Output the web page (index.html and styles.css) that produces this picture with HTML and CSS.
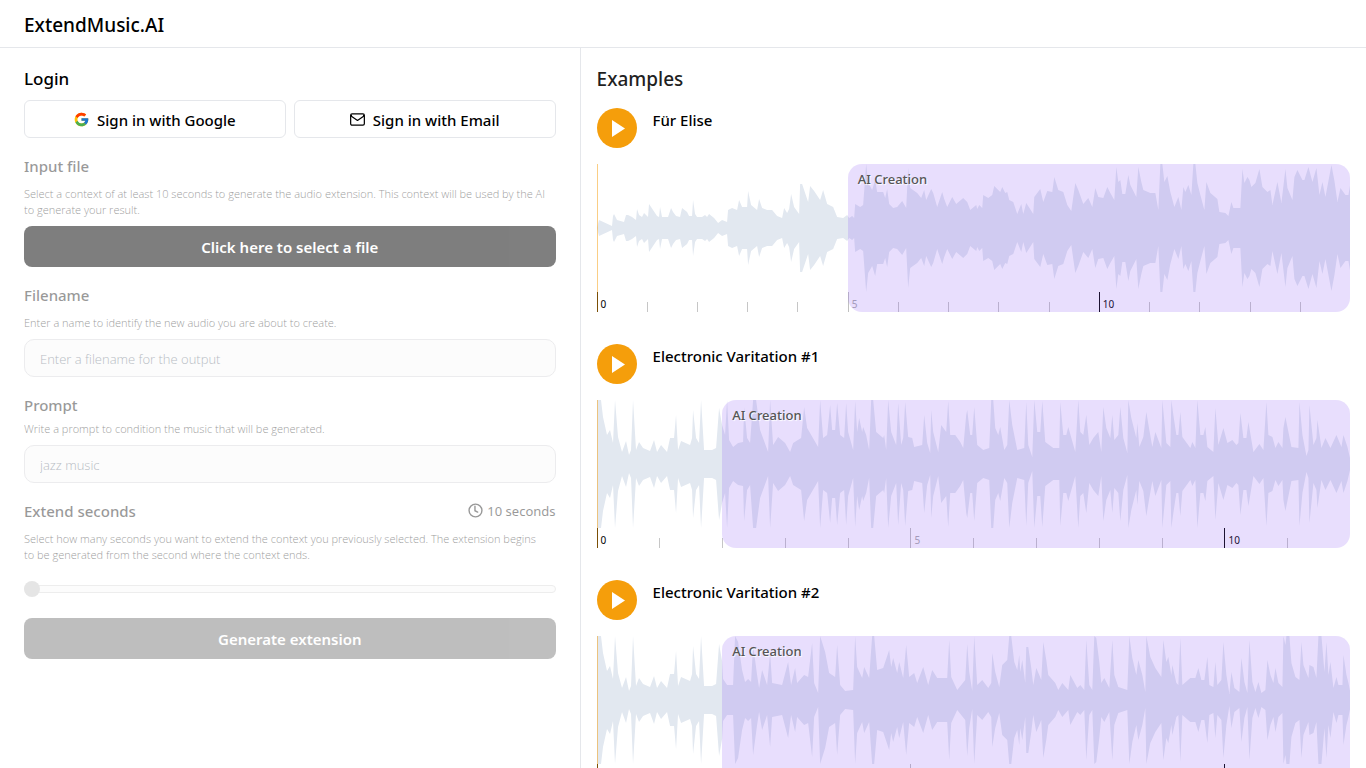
FILE: index.html
```html
<!DOCTYPE html>
<html lang="en">
<head>
<meta charset="utf-8">
<meta name="viewport" content="width=device-width, initial-scale=1">
<title>ExtendMusic.AI</title>
<link rel="stylesheet" href="styles.css">
</head>
<body>
<header class="topbar"><h1 class="brand">ExtendMusic.AI</h1></header>
<main class="layout">
  <section class="panel">
    <h2 class="panel-title">Login</h2>
    <div class="login-row">
      <button class="login-btn" type="button">
        <svg class="icon" viewBox="2 2 44 44" aria-hidden="true">
          <path fill="#FFC107" d="M43.6 20H24v8h11.3C33.7 32.700 29.200 36 24 36c-6.600 0-12-5.400-12-12s5.400-12 12-12c3.100 0 5.800 1.200 8 3l5.700-5.700C34 6.100 29.300 4 24 4 13 4 4 13 4 24s9 20 20 20 20-9 20-20c0-1.300-.1-2.700-.4-4z"/>
          <path fill="#FF3D00" d="M6.300 14.700l6.600 4.800C14.700 15.100 19 12 24 12c3.100 0 5.800 1.200 8 3l5.700-5.700C34 6.100 29.300 4 24 4 16.300 4 9.700 8.300 6.300 14.700z"/>
          <path fill="#4CAF50" d="M24 44c5.200 0 9.900-2 13.400-5.200l-6.200-5.200C29.200 35.100 26.700 36 24 36c-5.200 0-9.600-3.300-11.300-8l-6.500 5C9.500 39.600 16.200 44 24 44z"/>
          <path fill="#1976D2" d="M43.600 20H24v8h11.300c-.8 2.200-2.200 4.200-4.100 5.600l6.200 5.200C37 39.200 44 34 44 24c0-1.300-.1-2.700-.4-4z"/>
        </svg>
        Sign in with Google
      </button>
      <button class="login-btn" type="button">
        <svg class="icon" viewBox="0 0 16 16" fill="none" stroke="currentColor" stroke-width="1.300" stroke-linejoin="round" stroke-linecap="round" aria-hidden="true">
          <rect x="0.700" y="2" width="14.600" height="12" rx="1.500"/><path d="M1.500 3.500v1L8 9l6.500-4.500v-1"/>
        </svg>
        Sign in with Email
      </button>
    </div>

    <form class="form">
      <div class="field">
        <label class="label muted" for="file">Input file</label>
        <p class="hint muted">Select a context of at least 10 seconds to generate the audio extension. This context will be used by the AI to generate your result.</p>
        <button class="primary file-btn" id="file" type="button" disabled>Click here to select a file</button>
      </div>
      <div class="field">
        <label class="label muted" for="filename">Filename</label>
        <p class="hint muted">Enter a name to identify the new audio you are about to create.</p>
        <input class="text-input" id="filename" type="text" placeholder="Enter a filename for the output" disabled>
      </div>
      <div class="field field-tight">
        <label class="label muted" for="prompt">Prompt</label>
        <p class="hint muted">Write a prompt to condition the music that will be generated.</p>
        <input class="text-input" id="prompt" type="text" placeholder="jazz music" disabled>
      </div>
      <div class="field">
        <div class="label-row muted">
          <label class="label" for="seconds">Extend seconds</label>
          <output class="duration" for="seconds">
            <svg class="icon" viewBox="1 1 14 14" fill="none" stroke="currentColor" stroke-width="1.300" stroke-linecap="round" aria-hidden="true"><circle cx="8" cy="8" r="6"/><path d="M7.500 4v4.200l2.500 1.300"/></svg>
            10 seconds
          </output>
        </div>
        <p class="hint muted">Select how many seconds you want to extend the context you previously selected. The extension begins to be generated from the second where the context ends.</p>
        <input class="slider" id="seconds" type="range" min="10" max="60" value="10" disabled>
      </div>
      <button class="primary generate-btn" type="submit" disabled>Generate extension</button>
    </form>
  </section>

  <section class="examples">
    <h2 class="examples-title">Examples</h2>
    <article class="example" data-wave="elise" data-seconds="15" data-start="5">
      <div class="example-head">
        <button class="play" type="button" aria-label="Play Für Elise"><svg viewBox="0 0 40 40"><path d="M15 12v17l13-8.500z"/></svg></button>
        <h3 class="example-name">Für Elise</h3>
      </div>
    </article>
    <article class="example" data-wave="electronic1" data-seconds="12" data-start="2">
      <div class="example-head">
        <button class="play" type="button" aria-label="Play Electronic Varitation #1"><svg viewBox="0 0 40 40"><path d="M15 12v17l13-8.500z"/></svg></button>
        <h3 class="example-name">Electronic Varitation #1</h3>
      </div>
    </article>
    <article class="example" data-wave="electronic2" data-seconds="12" data-start="2">
      <div class="example-head">
        <button class="play" type="button" aria-label="Play Electronic Varitation #2"><svg viewBox="0 0 40 40"><path d="M15 12v17l13-8.500z"/></svg></button>
        <h3 class="example-name">Electronic Varitation #2</h3>
      </div>
    </article>
  </section>
</main>
<script src="waves.js"></script>
</body>
</html>
```
FILE: styles.css
```css
* { box-sizing: border-box; }
body {
  margin: 0;
  height: 100vh;
  display: flex;
  flex-direction: column;
  overflow: hidden;
  background: #fff;
  color: #000;
  font-family: "Noto Sans", "Open Sans", sans-serif;
  font-size: 15px;
}
h1, h2, h3, p { margin: 0; font-weight: 500; }
button, input { font: inherit; color: inherit; }

.topbar { flex: none; padding: 10px 24px 7px; border-bottom: 1px solid #e5e7eb; }
.brand { font-size: 19px; line-height: 30px; }

.layout { flex: 1; min-height: 0; display: flex; }
.panel { width: 42.5%; padding: 16px 24px; border-right: 1px solid #e5e7eb; }
.panel-title { font-size: 17px; line-height: 30px; margin-bottom: 6px; }

.login-row { display: flex; gap: 8px; margin-bottom: 16px; }
.login-btn {
  flex: 1;
  height: 38px;
  display: flex;
  align-items: center;
  justify-content: center;
  gap: 8px;
  padding: 2px 0 0;
  background: #fff;
  border: 1px solid #e5e7eb;
  border-radius: 6px;
  font-weight: 500;
}
.icon { width: 15px; height: 15px; margin-bottom: 2px; }

.form { display: flex; flex-direction: column; gap: 16px; }
.field { display: flex; flex-direction: column; gap: 8px; }
.field-tight { gap: 4px; }
.field-tight .text-input { margin-top: 4px; }
.muted { opacity: 0.4; }
.label { font-weight: 500; line-height: 24px; }
.label-row { display: flex; justify-content: space-between; align-items: center; }
.duration { display: flex; align-items: center; gap: 4px; font-size: 13px; line-height: 24px; }
.hint {
  padding-right: 8px;
  font-family: "Open Sans", sans-serif;
  font-size: 11px;
  line-height: 16px;
  font-weight: 300;
}

.primary { border: 0; border-radius: 8px; background: #000; color: #fff; font-weight: 600; }
.file-btn { height: 41px; opacity: 0.5; }
.generate-btn { height: 41px; margin-top: 5px; opacity: 0.25; }

.text-input {
  height: 38px;
  padding: 2px 15px 0;
  border: 1px solid #ececee;
  border-radius: 10px;
  background: #fcfcfc;
  font-family: "Open Sans", sans-serif;
  font-size: 13px;
  font-weight: 300;
}
.text-input::placeholder { color: #b8bcc4; opacity: 1; }

.slider { appearance: none; width: 100%; height: 16px; margin: 10px 0 0; background: none; }
.slider::-webkit-slider-runnable-track {
  height: 8px;
  border: 1px solid #ededed;
  border-radius: 4px;
  background: #fcfcfc;
}
.slider::-webkit-slider-thumb {
  appearance: none;
  width: 16px;
  height: 16px;
  margin-top: -5px;
  margin-left: -1px;
  border-radius: 50%;
  background: #e5e5e5;
}

.examples { flex: 1; min-width: 0; padding: 16px; overflow: hidden; }
.examples-title { font-size: 19px; line-height: 30px; margin-bottom: 14px; color: #1f1f1f; }
.example { margin-bottom: 32px; }
.example-head { display: flex; gap: 16px; margin-bottom: 16px; }
.play { width: 40px; height: 40px; padding: 0; border: 0; border-radius: 50%; background: #f59e0b; }
.play svg { display: block; fill: #fff; }
.example-name { font-size: 15px; line-height: 24px; }

.track { position: relative; }
.wave { display: block; width: 100%; height: 128px; fill: #e2e8f0; }
.timeline {
  display: grid;
  grid-auto-flow: column;
  grid-auto-columns: minmax(0, 1fr);
  align-items: end;
  height: 20px;
  margin: 0;
  padding: 0;
  list-style: none;
}
.tick { height: 10px; border-left: 1px solid #c6c6c6; }
.tick-major {
  height: 20px;
  padding: 5px 0 0 3px;
  border-color: #000;
  font-size: 10px;
  line-height: 15px;
}
.tick-mid { border-color: #c0c0c0; color: #aaa; }
.cursor { position: absolute; inset: 0 auto 0 0; width: 1px; background: rgba(245, 158, 11, 0.5); }
.region {
  position: absolute;
  inset: 0 0 0 auto;
  padding: 3px 10px;
  border-radius: 14px;
  background: rgba(139, 92, 246, 0.2);
  color: #555;
  font-size: 13px;
  font-weight: 500;
  line-height: 24px;
  text-shadow: 1px 1px 1px #fff;
}
```
FILE: waves.js
```js
// Amplitude envelopes: flat lists of position (0-753) and height (0-64) pairs.
const intro = [0,64,4,64,6,47,10,29,13,34,16,21,18,64,21,27,25,12,29,23,32,9,34,14,36,64,39,14,42,22,46,16,53,13,57,24,60,12,64,19,70,12,73,26,77,26,79,49,81,14,84,23,93,19,95,26,96,54,99,26,102,21,104,64,107,14,115,14,119,16,122,56,125,39];

const envelopes = {
  elise: [0,0,2,8,15,2,16,12,17,14,20,8,27,6,29,13,31,13,35,11,39,8,40,19,42,13,45,11,47,15,51,11,52,24,56,18,60,12,62,11,63,21,65,11,71,11,74,20,76,16,79,12,83,11,85,20,90,16,92,12,95,12,96,28,98,14,100,11,105,11,108,13,110,11,112,14,117,10,121,5,125,8,130,6,131,18,135,20,140,18,142,28,145,21,150,21,151,37,154,23,160,18,162,29,165,20,170,18,175,18,180,12,185,10,187,20,190,15,192,19,194,34,197,21,202,14,203,44,205,44,211,26,213,42,217,37,223,28,226,38,230,24,236,21,240,11,246,10,250,13,
    252,10,255,12,257,10,258,24,263,21,266,23,269,64,271,45,275,38,278,48,280,36,286,36,288,30,290,39,292,24,296,20,300,21,305,27,309,20,311,60,313,40,320,35,324,30,327,38,329,28,334,39,336,35,340,21,345,36,347,29,350,21,355,31,359,24,366,30,370,26,373,18,379,23,380,19,382,23,385,20,386,33,391,30,395,33,397,42,400,39,403,36,405,41,408,35,410,36,412,28,416,26,420,14,424,24,426,14,429,25,436,14,437,31,443,39,446,26,450,37,455,36,457,51,461,38,466,36,470,23,474,17,478,45,481,38,486,24,491,30,495,21,498,40,
    501,31,506,30,510,41,513,35,517,28,519,61,521,46,523,48,525,34,528,34,531,53,533,43,539,31,541,61,544,46,546,38,553,35,558,35,561,18,563,64,565,64,567,46,570,52,573,36,577,21,581,31,584,18,586,41,588,36,591,43,594,33,596,64,598,64,600,45,603,33,607,18,609,46,613,35,620,29,622,16,628,15,631,12,634,26,636,20,643,20,645,59,647,45,650,51,652,48,654,41,658,45,662,59,665,41,670,36,673,38,675,23,680,46,684,25,688,59,690,40,695,28,697,51,700,58,705,48,707,48,711,61,715,46,719,60,722,33,725,46,728,31,734,63,737,47,740,26,743,40,748,33,751,33,753,45],
  electronic1: [...intro,128,29,130,64,132,24,136,17,141,21,146,22,147,57,150,26,153,21,156,64,159,64,163,34,171,12,173,64,176,19,181,27,188,21,193,12,196,21,204,26,207,57,210,36,221,17,223,64,226,26,230,29,233,59,235,34,238,34,240,61,243,29,247,26,249,61,251,32,256,14,258,63,260,32,262,46,265,32,266,37,269,29,272,14,274,64,276,64,279,32,286,26,287,29,289,14,291,64,294,32,299,19,301,61,304,19,306,26,308,62,311,27,315,26,317,17,325,19,327,49,330,21,333,11,334,54,336,32,341,12,344,39,349,32,351,63,353,29,358,29,363,22,366,16,369,49,370,54,373,29,375,29,377,57,380,19,386,14,392,16,394,64,396,64,398,36,401,29,403,37,407,14,410,19,412,64,415,39,420,14,427,16,429,62,431,19,435,7,437,64,440,32,443,32,445,63,448,22,456,16,462,16,463,62,466,29,469,29,471,37,478,12,481,64,483,32,486,29,489,49,492,19,496,26,
    501,32,504,12,506,57,509,36,513,26,515,49,517,24,521,29,523,57,526,26,530,11,531,64,534,46,539,26,540,41,542,17,546,27,549,52,552,34,555,17,558,32,564,16,565,64,569,21,573,17,574,64,576,49,579,29,581,29,583,52,585,27,593,16,595,22,598,16,600,64,603,29,606,29,608,37,610,17,616,12,618,56,621,19,626,36,630,21,635,24,639,19,641,21,643,51,646,26,649,26,651,42,656,12,662,20,666,14,669,62,671,29,675,27,678,16,681,22,685,16,686,36,688,47,691,32,694,17,701,16,702,62,705,29,709,8,711,14,712,59,716,19,719,26,720,44,724,16,728,26,733,16,739,29,744,17,746,29,750,17,753,4],
  electronic2: [...intro,126,21,130,15,136,15,138,64,141,58,145,30,148,18,151,21,154,18,156,55,160,25,162,12,165,30,170,15,173,47,175,17,185,15,191,38,194,15,198,32,200,17,207,25,211,23,215,57,217,17,221,7,223,64,228,48,232,27,238,23,240,55,243,15,248,9,256,10,258,64,260,33,265,22,267,33,272,22,275,64,277,64,280,30,286,32,292,50,294,33,296,42,300,27,302,38,306,22,309,55,312,23,317,27,320,17,326,33,331,15,335,30,340,22,350,22,352,60,354,23,360,10,368,20,370,56,372,28,375,9,377,64,380,15,385,20,391,12,394,17,395,47,398,28,402,13,405,35,410,40,412,64,414,64,417,38,420,30,422,45,423,28,425,40,428,17,429,53,431,53,434,32,436,15,439,32,442,25,444,20,446,58,449,40,451,25,458,17,461,10,465,17,471,10,473,25,480,12,483,15,487,10,489,60,492,15,495,10,497,64,499,62,502,38,504,17,507,22,512,12,515,60,517,25,521,13,530,10,532,64,535,42,539,25,541,40,545,25,548,8,549,64,553,43,558,32,564,23,566,60,569,38,571,43,574,25,575,35,579,17,581,15,583,62,585,15,593,22,598,22,601,32,604,20,607,20,610,43,612,15,616,13,618,38,620,15,624,20,626,58,629,25,632,6,634,28,637,12,642,8,644,42,647,18,650,7,652,60,655,18,658,8,661,18,664,7,668,10,670,40,673,25,676,17,678,32,681,17,685,13,686,64,688,55,689,64,692,64,694,37,698,23,702,20,704,58,706,35,711,22,712,35,716,33,719,22,721,64,724,64,727,28,729,58,731,25,733,38,736,12,739,23,741,15,745,15,746,45,749,25,751,17,753,7]
};

function wavePath(values) {
  const top = [];
  const bottom = [];
  for (let i = 0; i < values.length; i += 2) {
    top.push(values[i] + ' ' + (64 - values[i + 1]));
    bottom.unshift(values[i] + ' ' + (64 + values[i + 1]));
  }
  return 'M' + top.concat(bottom).join('L') + 'Z';
}

function timeline(seconds) {
  let items = '';
  for (let s = 0; s < seconds; s++) {
    if (s % 5) items += '<li class="tick"></li>';
    else items += '<li class="tick tick-major' + (s % 10 ? ' tick-mid' : '') + '">' + s + '</li>';
  }
  return items;
}

document.querySelectorAll('.example').forEach((example) => {
  const { wave, seconds, start } = example.dataset;
  const track = document.createElement('div');
  track.className = 'track';
  track.innerHTML =
    '<svg class="wave" viewBox="0 0 753 128" preserveAspectRatio="none" aria-hidden="true"><path d="' + wavePath(envelopes[wave]) + '"/></svg>' +
    '<ol class="timeline">' + timeline(Number(seconds)) + '</ol>' +
    '<div class="cursor"></div>' +
    '<div class="region" style="width:' + (100 - start / seconds * 100) + '%">AI Creation</div>';
  example.append(track);
});
```
